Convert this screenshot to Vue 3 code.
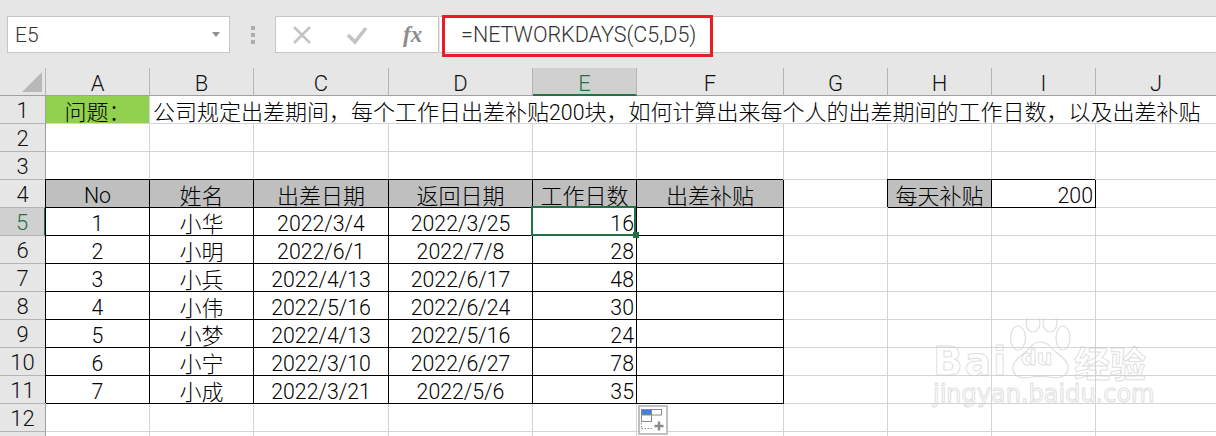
<script setup>
const columns = ['A', 'B', 'C', 'D', 'E', 'F', 'G', 'H', 'I', 'J']
const people = [
  ['1', '小华', '2022/3/4', '2022/3/25', '16'],
  ['2', '小明', '2022/6/1', '2022/7/8', '28'],
  ['3', '小兵', '2022/4/13', '2022/6/17', '48'],
  ['4', '小伟', '2022/5/16', '2022/6/24', '30'],
  ['5', '小梦', '2022/4/13', '2022/5/16', '24'],
  ['6', '小宁', '2022/3/10', '2022/6/27', '78'],
  ['7', '小成', '2022/3/21', '2022/5/6', '35'],
]
const headers = ['No', '姓名', '出差日期', '返回日期', '工作日数', '出差补贴']
</script>

<template>
  <div class="app">
    <div class="toolbar">
      <div class="namebox">
        <span>E5</span>
        <i class="caret"></i>
      </div>
      <div class="dots"><i></i><i></i><i></i></div>
      <div class="fxbox">
        <svg class="ic" width="24" height="20" viewBox="0 0 24 20"><path d="M4 2 L20 18 M20 2 L4 18" stroke="#c4c4c4" stroke-width="2.6" fill="none"/></svg>
        <svg class="ic" width="24" height="20" viewBox="0 0 24 20"><path d="M3 10 L10 17 L21 3" stroke="#c4c4c4" stroke-width="3.6" fill="none"/></svg>
        <span class="fx">fx</span>
      </div>
      <div class="formula">
        <span class="formula-text">=NETWORKDAYS(C5,D5)</span>
        <div class="redbox"></div>
      </div>
    </div>

    <div class="sheet">
      <div class="corner"><i></i></div>
      <div v-for="c in columns" :key="c" class="colhead" :class="{ sel: c === 'E' }">{{ c }}</div>

      <div class="rowhead">1</div>
      <div class="cell green cjk">问题：</div>
      <div class="cell long cjk">公司规定出差期间，每个工作日出差补贴<span class="num">200</span>块，如何计算出来每个人的出差期间的工作日数，以及出差补贴</div>

      <template v-for="r in [2, 3]" :key="r">
        <div class="rowhead">{{ r }}</div>
        <div v-for="c in columns" :key="c" class="cell"></div>
      </template>

      <div class="rowhead">4</div>
      <div v-for="h in headers" :key="h" class="cell tb head cjk" :class="{ num: h === 'No' }">{{ h }}</div>
      <div class="cell"></div>
      <div class="cell tb head cjk">每天补贴</div>
      <div class="cell tb num right">200</div>
      <div class="cell"></div>

      <template v-for="(p, i) in people" :key="i">
        <div class="rowhead" :class="{ sel: i === 0 }">{{ i + 5 }}</div>
        <div class="cell tb num">{{ p[0] }}</div>
        <div class="cell tb cjk">{{ p[1] }}</div>
        <div class="cell tb num">{{ p[2] }}</div>
        <div class="cell tb num">{{ p[3] }}</div>
        <div class="cell tb num right" :class="{ active: i === 0 }">{{ p[4] }}<i v-if="i === 0" class="handle"></i></div>
        <div class="cell tb"></div>
        <div v-for="c in 4" :key="c" class="cell"></div>
      </template>

      <div class="rowhead">12</div>
      <div v-for="c in columns" :key="c" class="cell" :class="{ anchor: c === 'F' }">
        <div v-if="c === 'F'" class="quick">
          <svg width="26" height="26" viewBox="0 0 26 26">
            <rect x="1.5" y="2.500" width="10" height="5.500" fill="#3f7fef" stroke="#8a8a8a"/>
            <rect x="11.5" y="2.500" width="10" height="5.500" fill="#fff" stroke="#8a8a8a"/>
            <rect x="1.5" y="8" width="10" height="6.500" fill="#fff" stroke="#8a8a8a"/>
            <path d="M1.5 21.500 H12 M1.5 16 V21" stroke="#8a8a8a" stroke-dasharray="1.5 1.5" fill="none"/>
            <path d="M19 14.500 V23.500 M14.500 19 H23.500" stroke="#8a8a8a" stroke-width="2.4" fill="none"/>
          </svg>
        </div>
      </div>

      <div class="rowhead"></div>
      <div v-for="c in columns" :key="c" class="cell"></div>
    </div>

    <div class="watermark">
      <div class="wm-top">
        <span class="wm-bai">Bai</span>
        <div class="wm-paw">
          <svg width="64" height="62" viewBox="0 0 64 62">
            <g fill="none" stroke="#d6d6d6" stroke-opacity=".8" stroke-width="1.2">
              <ellipse cx="10" cy="20" rx="7.500" ry="12"/>
              <ellipse cx="25" cy="5" rx="7" ry="9"/>
              <ellipse cx="42" cy="5" rx="7" ry="9"/>
              <ellipse cx="55" cy="20" rx="7" ry="12"/>
              <path d="M32 24 C24 24 22 31 15 36 C7 42 4 47 5 52 C7 60 16 61 24 59 C30 58 35 58 41 59 C50 61 59 59 60 51 C61 44 55 40 49 35 C43 30 40 24 32 24 Z"/>
            </g>
          </svg>
          <span class="wm-du">du</span>
        </div>
        <span class="wm-cn">经验</span>
      </div>
      <div class="wm-url">jingyan.baidu.com</div>
    </div>
  </div>
</template>

<style>
html, body { margin: 0; background: #fff; }
</style>

<style scoped>
.app {
  position: relative;
  width: 1216px;
  height: 436px;
  overflow: hidden;
  background: #fff;
  color: #111;
  font-family: Roboto, "Noto Sans CJK SC", sans-serif;
  font-weight: 300;
}
.toolbar {
  height: 68px;
  box-sizing: border-box;
  background: #e6e6e6;
  display: flex;
  align-items: flex-start;
  padding: 16px 0 0 7px;
}
.namebox {
  width: 223px;
  height: 37px;
  box-sizing: border-box;
  background: #fff;
  border: 1px solid #c6c6c6;
  display: flex;
  align-items: center;
  justify-content: space-between;
  padding: 0 9px 0 7px;
  font-size: 21px;
  color: #333;
}
.caret {
  width: 0;
  height: 0;
  border-left: 4px solid transparent;
  border-right: 4px solid transparent;
  border-top: 5px solid #8f8f8f;
}
.dots {
  width: 45px;
  height: 37px;
  display: flex;
  flex-direction: column;
  align-items: center;
  justify-content: center;
  gap: 3px;
}
.dots i {
  width: 4px;
  height: 4px;
  background: #adadad;
}
.fxbox {
  width: 164px;
  height: 37px;
  box-sizing: border-box;
  background: #fff;
  border: 1px solid #c6c6c6;
  display: flex;
  align-items: center;
  padding-left: 14px;
  gap: 31px;
  flex: none;
}
.ic { flex: none; }
.fx {
  font-family: "Liberation Serif", serif;
  font-style: italic;
  font-weight: 700;
  font-size: 23px;
  color: #8c8c8c;
  margin-left: 3px;
}
.formula {
  position: relative;
  flex: 1;
  height: 37px;
  margin-left: 1px;
  box-sizing: border-box;
  background: #fff;
  border-top: 1px solid #c6c6c6;
  border-bottom: 1px solid #c6c6c6;
  display: flex;
  align-items: center;
  padding-left: 21px;
  font-size: 21.5px;
  color: #333;
}
.redbox {
  position: absolute;
  left: 2px;
  top: -2px;
  width: 271px;
  height: 42px;
  box-sizing: border-box;
  border: 3px solid #ed1c24;
}
.sheet {
  display: grid;
  grid-template-columns: 46px 104px 104px 135px 144px 104px 147px 104px 104px 104px 121px;
  grid-auto-rows: 28px;
  font-size: 22px;
}
.corner {
  background: #e6e6e6;
  box-sizing: border-box;
  border-right: 1px solid #b4b4b4;
  border-bottom: 1px solid #9f9f9f;
  position: relative;
}
.corner i {
  position: absolute;
  right: 3px;
  bottom: 3px;
  width: 0;
  height: 0;
  border-left: 20px solid transparent;
  border-bottom: 20px solid #b9b9b9;
}
.colhead {
  background: #e6e6e6;
  box-sizing: border-box;
  border-right: 1px solid #b4b4b4;
  border-bottom: 1px solid #9f9f9f;
  text-align: center;
  line-height: 31px;
}
.colhead.sel {
  background: #d0d0d0;
  color: #217346;
  border-bottom: 2px solid #217346;
}
.rowhead {
  background: #e6e6e6;
  box-sizing: border-box;
  border-right: 1px solid #9f9f9f;
  border-bottom: 1px solid #b4b4b4;
  text-align: center;
  line-height: 30px;
}
.rowhead.sel {
  background: #d0d0d0;
  color: #217346;
  border-right: 2px solid #217346;
}
.cell {
  box-sizing: border-box;
  border-right: 1px solid #d4d4d4;
  border-bottom: 1px solid #d4d4d4;
  text-align: center;
  line-height: 32px;
  white-space: nowrap;
}
.cjk {
  font-family: "Noto Sans CJK SC", sans-serif;
  font-size: 22px;
  font-weight: 300;
  line-height: 29px;
  color: #000;
}
.num {
  font-family: Roboto, sans-serif;
  font-size: 21.3px;
  font-weight: 300;
  color: #000;
}
.cell.num { line-height: 32px; }
.green { background: #92d050; }
.long {
  grid-column: 3 / -1;
  text-align: left;
  padding-left: 3px;
}
.long .num { line-height: 1; }
.tb {
  border-right: 1px solid #000;
  border-bottom: 1px solid #000;
  box-shadow: -1px -1px 0 0 #000;
}
.head { background: #bfbfbf; }
.right {
  text-align: right;
  padding-right: 2px;
}
.active {
  position: relative;
}
.active::after {
  content: "";
  position: absolute;
  left: -2px;
  top: -2px;
  width: 105px;
  height: 30px;
  box-sizing: border-box;
  border: 2px solid #217346;
}
.handle {
  position: absolute;
  z-index: 2;
  left: 100px;
  top: 24px;
  width: 6px;
  height: 6px;
  background: #217346;
}
.anchor { position: relative; }
.quick {
  position: absolute;
  left: 1px;
  top: 1px;
  width: 30px;
  height: 30px;
  box-sizing: border-box;
  background: #fff;
  border: 2px solid #c0c0c0;
  display: flex;
  align-items: center;
  justify-content: center;
  z-index: 3;
}
.watermark {
  position: absolute;
  left: 933px;
  top: 318px;
  width: 220px;
  pointer-events: none;
  color: transparent;
  -webkit-text-stroke: 1px rgba(205, 205, 205, .65);
}
.wm-top {
  display: flex;
  align-items: flex-end;
  height: 62px;
}
.wm-bai {
  font-family: "DejaVu Sans", sans-serif;
  font-weight: 700;
  font-size: 39px;
  line-height: 36px;
  letter-spacing: 2px;
  width: 75px;
}
.wm-paw {
  position: relative;
  width: 64px;
  height: 62px;
}
.wm-du {
  position: absolute;
  left: 13px;
  top: 27px;
  font-family: "DejaVu Sans", sans-serif;
  font-weight: 700;
  font-size: 22px;
  line-height: 26px;
}
.wm-cn {
  font-family: "Noto Sans CJK SC", sans-serif;
  font-weight: 700;
  font-size: 36px;
  line-height: 36px;
  margin-left: 2px;
}
.wm-url {
  font-family: "DejaVu Sans", sans-serif;
  font-size: 24px;
  font-weight: 400;
  line-height: 28px;
  white-space: nowrap;
}
</style>
